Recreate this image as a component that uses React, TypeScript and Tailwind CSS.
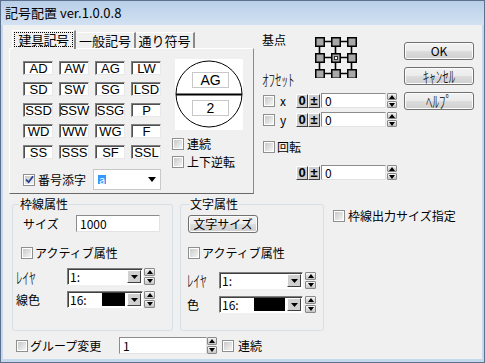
import React from 'react'

const codes = [
  ['AD', 'AW', 'AG', 'LW'],
  ['SD', 'SW', 'SG', 'LSD'],
  ['SSD', 'SSW', 'SSG', 'P'],
  ['WD', 'WW', 'WG', 'F'],
  ['SS', 'SSS', 'SF', 'SSL'],
]

const nar = "font-['Liberation_Sans_Narrow','Liberation_Sans',sans-serif]"

// half-width katakana render small in Noto CJK, stretch them a bit
function HW({ children }: { children: React.ReactNode }) {
  return <span className="inline-block origin-center scale-y-[1.25] text-[13px] font-light leading-none">{children}</span>
}

function Check({ on = false }: { on?: boolean }) {
  return (
    <span className="flex h-[12px] w-[12px] shrink-0 border border-[#8e8f8f] bg-white p-px">
      <span className="flex flex-1 items-center justify-center bg-gradient-to-br from-[#c9c9c9] to-[#f5f5f5]">
        {on && (
          <svg width="9" height="9" viewBox="0 0 9 9" className="overflow-visible">
            <path d="M1 4.5 L3.6 7.2 L8 1.2" fill="none" stroke="#22408f" strokeWidth="1.8" />
          </svg>
        )}
      </span>
    </span>
  )
}

function Spin({ className = '' }: { className?: string }) {
  return (
    <div className={`flex flex-col gap-px ${className}`}>
      {[0, 1].map((i) => (
        <div key={i} className="flex flex-1 items-center justify-center rounded-[1px] border border-[#8a8a8a] bg-gradient-to-b from-[#f6f6f6] to-[#c4c4c4]">
          <svg width="6" height="4" viewBox="0 0 6 4">
            <path d={i === 0 ? 'M0 4 L3 0 L6 4 Z' : 'M0 0 L3 4 L6 0 Z'} fill="#000" />
          </svg>
        </div>
      ))}
    </div>
  )
}

function Btn({ children, className = '' }: { children: React.ReactNode; className?: string }) {
  return (
    <div className={`flex items-center justify-center rounded-[3px] border border-[#707070] bg-[linear-gradient(#f2f2f2,#ebebeb_50%,#dddddd_50%,#cfcfcf)] leading-none shadow-[inset_0_0_0_1px_#fcfcfc] ${className}`}>
      {children}
    </div>
  )
}

function Raised({ children }: { children: React.ReactNode }) {
  return (
    <div className="flex h-[14px] w-[12px] items-center justify-center border border-t-white border-l-white border-r-[#404040] border-b-[#404040] bg-[#cfcfcf] font-['Liberation_Sans',sans-serif] text-[13px] font-bold leading-none">
      {children}
    </div>
  )
}

function Edit({ text, className = '' }: { text: string; className?: string }) {
  return (
    <div className={`flex items-center border border-t-[#8c8c8c] border-l-[#8c8c8c] border-r-[#e3e3e3] border-b-[#e3e3e3] bg-white pl-[3px] text-[12px] leading-none ${className}`}>
      {text}
    </div>
  )
}

function Drop({ text, swatch = '', className = '' }: { text: string; swatch?: string; className?: string }) {
  return (
    <div className={`flex h-[17px] border border-t-[#808080] border-l-[#808080] border-r-white border-b-white bg-white p-px pl-[2px] shadow-[inset_1px_1px_0_#404040] ${className}`}>
      <span className="flex-1 pt-px text-[12px] leading-[12px]">{text}</span>
      {swatch && <span className={`mr-[2px] bg-black ${swatch}`} />}
      <div className="flex w-[14px] items-center justify-center border border-t-white border-l-white border-r-[#404040] border-b-[#404040] bg-[#d0d0d0]">
        <svg width="7" height="4" viewBox="0 0 7 4"><path d="M0 0 L7 0 L3.5 4 Z" fill="#000" /></svg>
      </div>
    </div>
  )
}

function BasePoint() {
  const p = [0, 16, 32]
  return (
    <svg width="42" height="41" viewBox="0 0 42 41" className="mt-[5px] shrink-0">
      <path d="M4.5 4.5 H36.5 M4.5 20.5 H36.5 M4.5 36.5 H36.5 M4.5 4.5 V36.5 M20.5 4.5 V36.5 M36.5 4.5 V36.5" stroke="#000" strokeWidth="1.6" />
      {p.map((y) =>
        p.map((x) => (
          <g key={`${x}-${y}`}>
            <rect x={x + 0.75} y={y + 0.75} width="8.5" height="8.5" fill="#a8a8a8" stroke="#000" strokeWidth="1.5" />
            {x === 16 && y === 16 && <rect x={x + 3.5} y={y + 3.5} width="3" height="3" fill="#fff" stroke="#303030" strokeWidth="1" />}
          </g>
        ))
      )}
    </svg>
  )
}

function OffsetRow({ label }: { label?: string }) {
  return (
    <div className="flex h-[15px] items-center">
      <div className="flex w-[34px] items-center pl-px">
        {label && (
          <>
            <Check />
            <span className="ml-[5px] text-[12px] leading-none">{label}</span>
          </>
        )}
      </div>
      <Raised>0</Raised>
      <Raised>±</Raised>
      <Edit text="0" className="ml-[1px] h-[15px] w-[65px]" />
      <Spin className="ml-px h-[15px] w-[10px]" />
    </div>
  )
}

export default function App() {
  return (
    <div className="flex h-[363px] w-[485px] flex-col overflow-hidden border border-[#5d708c] bg-[#c5d8ee] font-['Noto_Sans_CJK_JP',sans-serif] text-black">
      <div className="flex h-[24px] items-center bg-gradient-to-b from-[#b8cee8] to-[#d3e2f2] pl-[4px] text-[13px]">記号配置 ver.1.0.0.8</div>

      <div className="mx-[2px] mb-[3px] flex-1 bg-[#f0f0f0] text-[12px]">
        {/* top */}
        <div className="flex pl-[6px] pt-[5px]">
          <div className="w-[245px]">
            <div className="flex h-[18px] items-end pl-[3px] text-[13px] leading-none">
              <div className="relative z-10 -mb-px h-[19px] w-[64px] border-t border-l border-white border-r-2 border-r-[#8a8a8a] bg-[#f0f0f0] px-px pb-[2px] pt-px">
                <div className="flex h-full items-center justify-center border border-dotted border-black tracking-[-0.5px]">建具記号</div>
              </div>
              <div className="flex h-[16px] w-[60px] items-center justify-center border-t border-white border-r-2 border-r-[#8a8a8a]">一般記号</div>
              <div className="flex h-[16px] w-[59px] items-center justify-center border-t border-white border-r-2 border-r-[#8a8a8a]">通り符号</div>
            </div>
            <div className="flex h-[146px] border border-white border-r-[#8a8a8a] border-b-[#696969] pl-[13px] pt-[10px]">
              <div className="flex flex-col pt-[2px]">
                <div className={`grid grid-cols-[repeat(4,30px)] gap-x-[6px] gap-y-[7px] ${nar}`}>
                  {codes.flat().map((c) => (
                    <div key={c} className="flex h-[14px] items-center justify-center border border-t-[#808080] border-l-[#808080] border-r-[#e8e8e8] border-b-[#e8e8e8] bg-white pl-px text-[13px] leading-none shadow-[inset_1px_1px_0_#505050]">
                      {c}
                    </div>
                  ))}
                </div>
                <div className="mt-[10px] flex h-[21px] items-center">
                  <Check on />
                  <span className="ml-[3px]">番号添字</span>
                  <div className="ml-[7px] flex h-[21px] w-[68px] items-center border border-[#c8c8c8] bg-white pl-[4px] pr-[4px]">
                    <span className="bg-[#3399ff] px-px text-[11px] leading-[9px] text-white">a</span>
                    <span className="flex-1" />
                    <svg width="8" height="5" viewBox="0 0 8 5"><path d="M0 0 L8 0 L4 5 Z" fill="#000" /></svg>
                  </div>
                </div>
              </div>
              <div className="ml-[14px] flex flex-col">
                <svg width="68" height="71" viewBox="0 0 68 71" className="bg-white">
                  <circle cx="34" cy="35" r="33" fill="none" stroke="#000" strokeWidth="1" />
                  <line x1="1" y1="35.5" x2="67" y2="35.5" stroke="#000" strokeWidth="2" />
                  <rect x="17.5" y="13.5" width="36" height="15" fill="#fff" stroke="#c8c8c8" />
                  <rect x="17.5" y="41.5" width="36" height="15" fill="#fff" stroke="#c8c8c8" />
                  <text x="35.5" y="25.5" textAnchor="middle" fontSize="14" fontFamily="Liberation Sans Narrow, Liberation Sans, sans-serif">AG</text>
                  <text x="35.5" y="53.5" textAnchor="middle" fontSize="14" fontFamily="Liberation Sans Narrow, Liberation Sans, sans-serif">2</text>
                </svg>
                <div className="-ml-[3px] mt-[7px] flex flex-col gap-[4px]">
                  <div className="flex h-[14px] items-center"><Check /><span className="ml-[3px]">連続</span></div>
                  <div className="flex h-[14px] items-center"><Check /><span className="ml-[3px]">上下逆転</span></div>
                </div>
              </div>
            </div>
          </div>

          <div className="ml-[8px] flex">
            <div className="flex w-[136px] flex-col pt-[2px]">
              <div className="flex h-[59px]">
                <div className="flex w-[53px] flex-col justify-between leading-[16px]">
                  <span>基点</span>
                  <span className="pb-[3px]"><HW>ｵﾌｾｯﾄ</HW></span>
                </div>
                <BasePoint />
              </div>
              <div className="mt-[2px]"><OffsetRow label="x" /></div>
              <div className="mt-[4px]"><OffsetRow label="y" /></div>
              <div className="mt-[13px] flex h-[14px] items-center pl-px">
                <Check />
                <span className="ml-[2px]">回転</span>
              </div>
              <div className="mt-[11px]"><OffsetRow /></div>
            </div>
            <div className="ml-[6px] mt-[12px] flex flex-col gap-[7px]">
              <Btn className="h-[18px] w-[70px] text-[12px]">OK</Btn>
              <Btn className="h-[18px] w-[70px]"><HW>ｷｬﾝｾﾙ</HW></Btn>
              <Btn className="h-[18px] w-[70px]"><HW>ﾍﾙﾌﾟ</HW></Btn>
            </div>
          </div>
        </div>

        {/* attributes */}
        <div className="mt-[2px] flex pl-[9px]">
          <fieldset className="h-[135px] w-[161px] rounded-[3px] border border-[#d5dfe5]">
            <legend className="ml-[6px] px-px leading-[16px]">枠線属性</legend>
            <div className="mt-[3px] flex h-[17px] items-center pl-[10px]">
              <span className="w-[53px]">サイズ</span>
              <Edit text="1000" className="h-[17px] w-[84px]" />
            </div>
            <div className="mt-[14px] flex h-[14px] items-center pl-[8px]">
              <Check />
              <span className="ml-[2px]">アクティブ属性</span>
            </div>
            <div className="mt-[8px] flex h-[17px] items-center pl-[3px]">
              <span className="w-[51px] pt-[2px]"><HW>ﾚｲﾔ</HW></span>
              <Drop text="1:" className="w-[76px]" />
              <Spin className="ml-px h-[17px] w-[11px]" />
            </div>
            <div className="mt-[6px] flex h-[17px] items-center pl-[3px]">
              <span className="w-[51px]">線色</span>
              <Drop text="16:" swatch="w-[23px]" className="w-[76px]" />
              <Spin className="ml-px h-[17px] w-[11px]" />
            </div>
          </fieldset>

          <fieldset className="ml-[7px] h-[135px] w-[144px] rounded-[3px] border border-[#d5dfe5]">
            <legend className="ml-[8px] px-px leading-[16px]">文字属性</legend>
            <div className="mt-[3px] pl-[7px]">
              <Btn className="h-[18px] w-[70px] text-[12px]">文字サイズ</Btn>
            </div>
            <div className="mt-[13px] flex h-[14px] items-center pl-[7px]">
              <Check />
              <span className="ml-[2px]">アクティブ属性</span>
            </div>
            <div className="mt-[12px] flex h-[17px] items-center pl-[6px]">
              <span className="w-[32px]"><HW>ﾚｲﾔ</HW></span>
              <Drop text="1:" className="w-[84px]" />
              <Spin className="ml-[2px] h-[17px] w-[11px]" />
            </div>
            <div className="mt-[7px] flex h-[17px] items-center pl-[6px]">
              <span className="w-[32px]">色</span>
              <Drop text="16:" swatch="w-[31px]" className="w-[84px]" />
              <Spin className="ml-[2px] h-[17px] w-[11px]" />
            </div>
          </fieldset>

          <div className="ml-[9px] mt-[13px] flex h-[14px] items-center">
            <Check />
            <span className="ml-[3px]">枠線出力サイズ指定</span>
          </div>
        </div>

        {/* bottom */}
        <div className="mt-[6px] flex h-[17px] items-center pl-[13px]">
          <div className="flex w-[103px] items-center">
            <Check />
            <span className="ml-[2px]">グループ変更</span>
          </div>
          <Edit text="1" className="h-[17px] w-[88px]" />
          <Spin className="h-[17px] w-[10px]" />
          <div className="ml-[5px]"><Check /></div>
          <span className="ml-[4px]">連続</span>
        </div>
      </div>
    </div>
  )
}
